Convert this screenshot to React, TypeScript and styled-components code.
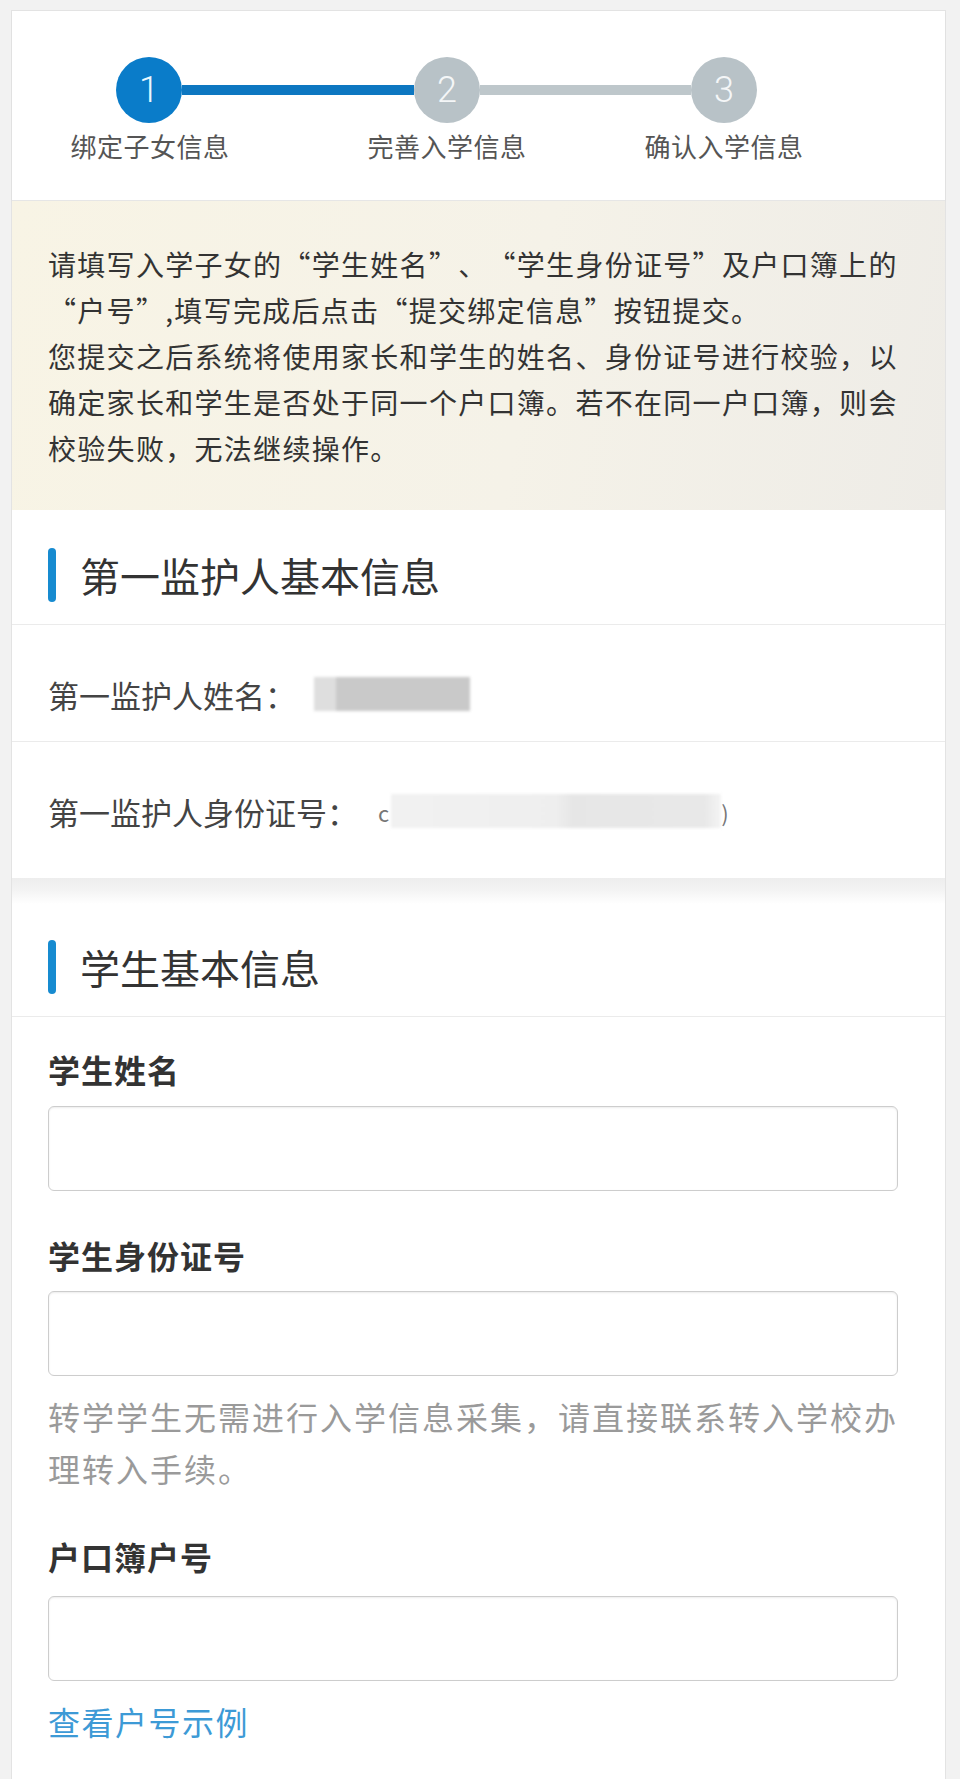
import styled, { createGlobalStyle } from 'styled-components';

const GlobalStyle = createGlobalStyle`
    html, body {
        margin: 0;
        padding: 0;
        background: #f2f2f2;
    }
    body {
        font-family: "Noto Sans CJK SC", "Noto Sans", "Liberation Sans", sans-serif;
        color: #333;
    }
    * {
        box-sizing: border-box;
    }
`;

const Page = styled.div`
    padding: 10px 14px 0 11px;
`;

const Card = styled.div`
    background: #fff;
    border: 1px solid #e3e3e3;
    border-bottom: none;
    min-height: 1769px;
`;

/* stepper */
const Stepper = styled.div`
    height: 190px;
    padding-top: 46px;
    border-bottom: 1px solid #e6e6e6;
    box-shadow: 0 1px 2px rgba(0, 0, 0, 0.03);
`;

const CircleRow = styled.div`
    display: flex;
    align-items: center;
    padding-left: 104px;
    height: 66px;
`;

const Circle = styled.div<{ $active?: boolean }>`
    width: 66px;
    height: 66px;
    border-radius: 50%;
    flex: none;
    display: flex;
    align-items: center;
    justify-content: center;
    background: ${(p) => (p.$active ? '#0a7cc9' : '#b8c2c7')};
    color: ${(p) => (p.$active ? '#e9f8ff' : '#f4f6f7')};
    font-family: "Roboto", "Liberation Sans", sans-serif;
    font-weight: 300;
    font-size: 36px;
    line-height: 1;
`;

const Connector = styled.div<{ $active?: boolean; $w: number }>`
    width: ${(p) => p.$w}px;
    height: 10px;
    flex: none;
    background: ${(p) => (p.$active ? '#0d77c1' : '#bec7cb')};
`;

const LabelRow = styled.div`
    display: flex;
    margin-top: 7px;
`;

const StepLabel = styled.div<{ $ml: number }>`
    width: 180px;
    margin-left: ${(p) => p.$ml}px;
    text-align: center;
    font-size: 26px;
    line-height: 32px;
    letter-spacing: 0.5px;
    color: #555;
`;

/* notice */
const Notice = styled.div`
    padding: 40px 36px 39px;
    background: linear-gradient(100deg, #f8f4e5 0%, #f5f2e8 55%, #eeece7 100%);
    font-size: 28px;
    line-height: 46px;
    letter-spacing: 1.3px;
    color: #333;
    /* keep the full-width punctuation boxes untrimmed */
    text-spacing-trim: space-all;
`;

/* sections */
const SectionHeader = styled.div<{ $pt: number }>`
    display: flex;
    align-items: center;
    padding: ${(p) => p.$pt}px 36px 22px;
    border-bottom: 1px solid #ebebeb;
`;

const Bar = styled.span`
    width: 8px;
    height: 54px;
    border-radius: 4px;
    background: #178bd0;
    flex: none;
`;

const SectionTitle = styled.h2`
    margin: 0 0 0 24px;
    font-size: 40px;
    line-height: 54px;
    font-weight: 400;
    color: #333;
`;

const InfoRow = styled.div<{ $h: number; $last?: boolean }>`
    height: ${(p) => p.$h}px;
    padding: 50px 36px 0;
    display: flex;
    align-items: flex-start;
    border-bottom: ${(p) => (p.$last ? 'none' : '1px solid #ebebeb')};
`;

const InfoLabel = styled.span`
    font-size: 31px;
    line-height: 40px;
    color: #444;
`;

const Redact = styled.span<{ $w: number; $ml: number; $tone: string }>`
    display: inline-block;
    width: ${(p) => p.$w}px;
    height: 34px;
    margin-left: ${(p) => p.$ml}px;
    margin-top: 2px;
    background: ${(p) => p.$tone};
    filter: blur(1.5px);
`;

const Crumb = styled.span<{ $ml: number }>`
    margin-left: ${(p) => p.$ml}px;
    font-size: 22px;
    line-height: 40px;
    color: #777;
`;

const Gap = styled.div`
    height: 26px;
    background: linear-gradient(#ededed 0%, #f3f3f3 45%, #fff 100%);
`;

/* form */
const Form = styled.div`
    padding: 0 47px 36px 36px;
`;

const FieldLabel = styled.label<{ $mt: number }>`
    display: block;
    margin-top: ${(p) => p.$mt}px;
    font-size: 32px;
    line-height: 40px;
    font-weight: 700;
    letter-spacing: 1px;
    color: #333;
`;

const Input = styled.input<{ $mt: number }>`
    display: block;
    width: 100%;
    height: 85px;
    margin-top: ${(p) => p.$mt}px;
    border: 1px solid #cdcdcd;
    border-radius: 6px;
    box-shadow: inset 0 1px 2px rgba(0, 0, 0, 0.08);
    background: #fff;
    outline: none;
    padding: 0 16px;
    font-size: 30px;
    font-family: inherit;
`;

const Helper = styled.p`
    margin: 14px 0 0;
    font-size: 32px;
    line-height: 52px;
    letter-spacing: 2px;
    color: #9a9a9a;
`;

const Link = styled.a`
    display: block;
    margin-top: 20px;
    font-size: 32px;
    line-height: 40px;
    letter-spacing: 1.5px;
    color: #3d9ad6;
    text-decoration: none;
`;

export default function App() {
    return (
        <Page lang="zh-CN">
            <GlobalStyle />
            <Card>
                <Stepper>
                    <CircleRow>
                        <Circle $active>1</Circle>
                        <Connector $active $w={232} />
                        <Circle>2</Circle>
                        <Connector $w={211} />
                        <Circle>3</Circle>
                    </CircleRow>
                    <LabelRow>
                        <StepLabel $ml={48}>绑定子女信息</StepLabel>
                        <StepLabel $ml={117}>完善入学信息</StepLabel>
                        <StepLabel $ml={97}>确认入学信息</StepLabel>
                    </LabelRow>
                </Stepper>

                <Notice>
                    请填写入学子女的“学生姓名”、“学生身份证号”及户口簿上的
                    <br />
                    “户号”,填写完成后点击“提交绑定信息”按钮提交。
                    <br />
                    您提交之后系统将使用家长和学生的姓名、身份证号进行校验，以
                    <br />
                    确定家长和学生是否处于同一个户口簿。若不在同一户口簿，则会
                    <br />
                    校验失败，无法继续操作。
                </Notice>

                <SectionHeader $pt={38}>
                    <Bar />
                    <SectionTitle>第一监护人基本信息</SectionTitle>
                </SectionHeader>
                <InfoRow $h={117}>
                    <InfoLabel>第一监护人姓名：</InfoLabel>
                    <Redact
                        $w={156}
                        $ml={18}
                        $tone="linear-gradient(90deg, #dedede 0 22px, #c9c9c9 22px 100%)"
                    />
                </InfoRow>
                <InfoRow $h={136} $last>
                    <InfoLabel>第一监护人身份证号：</InfoLabel>
                    <Crumb $ml={20}>c</Crumb>
                    <Redact
                        $w={330}
                        $ml={2}
                        $tone="linear-gradient(90deg, #f1f1f1 0%, #eeeeee 50%, #e6e6e6 55%, #e8e8e8 95%, #f4f4f4 100%)"
                    />
                    <Crumb $ml={0}>)</Crumb>
                </InfoRow>

                <Gap />

                <SectionHeader $pt={36}>
                    <Bar />
                    <SectionTitle>学生基本信息</SectionTitle>
                </SectionHeader>
                <Form>
                    <FieldLabel $mt={32}>学生姓名</FieldLabel>
                    <Input $mt={17} />
                    <FieldLabel $mt={44}>学生身份证号</FieldLabel>
                    <Input $mt={16} />
                    <Helper>转学学生无需进行入学信息采集，请直接联系转入学校办理转入手续。</Helper>
                    <FieldLabel $mt={42}>户口簿户号</FieldLabel>
                    <Input $mt={20} />
                    <Link href="#">查看户号示例</Link>
                </Form>
            </Card>
        </Page>
    );
}
